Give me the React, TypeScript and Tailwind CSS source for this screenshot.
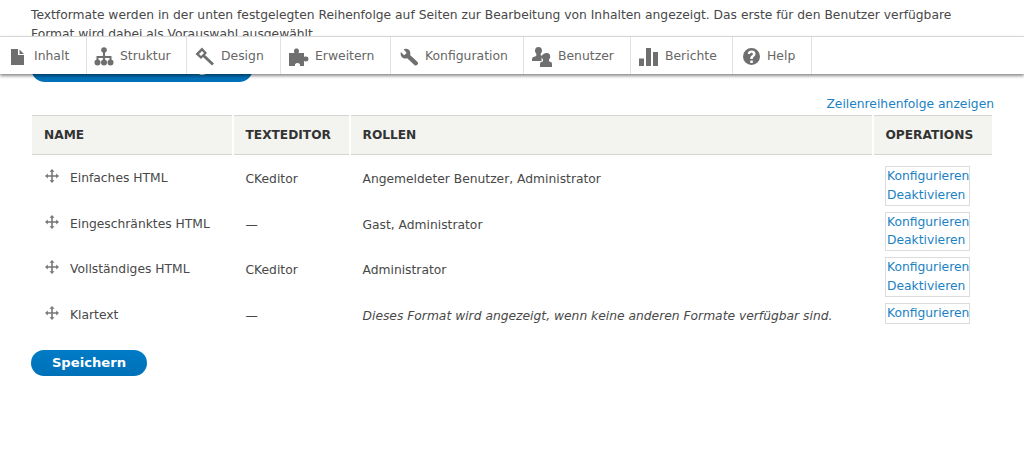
const rows = [
    { name: "Einfaches HTML", editor: "CKeditor", roles: "Angemeldeter Benutzer, Administrator", disable: true },
    { name: "Eingeschränktes HTML", editor: "—", roles: "Gast, Administrator", disable: true },
    { name: "Vollständiges HTML", editor: "CKeditor", roles: "Administrator", disable: true },
    { name: "Klartext", editor: "—", roles: "Dieses Format wird angezeigt, wenn keine anderen Formate verfügbar sind.", disable: false },
];

const icons: Record<string, React.ReactNode> = {
    Inhalt: <path d="M0 0h7v6h6v10H0zM8.500 0.500L13 5H8.500z" />,
    Struktur: (
        <>
            <circle cx="10" cy="3" r="2.800" />
            <path d="M9 5h2v4h6.500v4h-2v-2H11v2H9v-2H4.500v2h-2V9H9z" />
            <circle cx="3.500" cy="15.500" r="3" />
            <circle cx="10" cy="15.500" r="3" />
            <circle cx="16.500" cy="15.500" r="3" />
        </>
    ),
    Design: <path fillRule="evenodd" d="M7 0.500L0.500 7 6 12l2-2 9 8.500 2-2-9-8.500 2-2zM7 4L4 7l2 2 3-3z" />,
    Erweitern: <path d="M0 5h5.500C4.500 3 5 0.500 7.500 0.500S10.500 3 9.500 5H15v4c2-1 4.500-.5 4.500 2s-2.500 3-4.500 2v5h-4c.5-1.500-.5-3-2.500-3S5.500 16.500 6 18H0z" />,
    Konfiguration: <path d="M1 4l3.500 3.500L7.500 5 4 1c3-1.500 7-.5 7.500 4 0 .8 0 1.500-.3 2.200L19.500 15c.8 1 .7 2.300-.3 3.200-1 1-2.200 1-3.200.1L8 10.800C4 12.500-.5 9 1 4z" />,
    Benutzer: (
        <>
            <path d="M6.500 0C8.800 0 10 1.600 10 3.600c0 1.300-.5 2.500-1.300 3.200v1.500c.8.300 1.500.5 2.100.8-.8.800-1.300 2-1.300 3.400 0 .5.100 1 .2 1.500H0v-2c0-1.800 2.500-2.300 4.300-3V6.800C3.500 6.100 3 4.900 3 3.600 3 1.600 4.200 0 6.500 0z" />
            <path d="M15 6c2 0 3.200 1.500 3.200 3.500 0 1.300-.5 2.400-1.200 3v1.700c1.300.5 3 .9 3 2.600V20H8v-3.200c0-1.700 1.700-2.100 3-2.600v-1.700c-.7-.6-1.200-1.700-1.200-3C9.800 7.500 13 6 15 6z" />
        </>
    ),
    Berichte: <path d="M0 10.500h5V18H0zM7 0h5v18H7zM14 4h5v14h-5z" />,
    Help: <path fillRule="evenodd" d="M8.500 0a8.500 8.500 0 1 1 0 17A8.500 8.500 0 0 1 8.500 0zM7.300 12.500V15h2.500v-2.500zM8.700 2.500C6.600 2.500 5 3.500 4.600 5.600l2.200.6c.3-1 .9-1.500 1.700-1.500s1.400.5 1.400 1.200c0 1.400-2.600 1.600-2.600 4.200v1h2.500v-.6c0-1.600 2.700-1.900 2.700-4.700 0-2.100-1.700-3.300-3.800-3.300z" />,
};

const menu = [
    { label: "Inhalt", w: "w-[87px]", box: "0 0 13 16", size: "w-[13px] h-[16px]", gap: "gap-[10px] pl-[11px]" },
    { label: "Struktur", w: "w-[100px]", box: "0 0 20 19", size: "w-[20px] h-[19px]", gap: "gap-[6px] pl-[7px]" },
    { label: "Design", w: "w-[94px]", box: "0 0 20 19", size: "w-[20px] h-[19px]", gap: "gap-[6px] pl-[8px]" },
    { label: "Erweitern", w: "w-[110px]", box: "0 0 20 18", size: "w-[20px] h-[18px]", gap: "gap-[6px] pl-[8px]" },
    { label: "Konfiguration", w: "w-[133px]", box: "0 0 20 19", size: "w-[18px] h-[18px]", gap: "gap-[7px] pl-[9px]" },
    { label: "Benutzer", w: "w-[107px]", box: "0 0 20 20", size: "w-[20px] h-[20px]", gap: "gap-[6px] pl-[8px]" },
    { label: "Berichte", w: "w-[102px]", box: "0 0 20 18", size: "w-[20px] h-[18px]", gap: "gap-[6px] pl-[8px]" },
    { label: "Help", w: "w-[79px]", box: "0 0 17 17", size: "w-[17px] h-[17px]", gap: "gap-[7px] pl-[10px]" },
];

function DragHandle() {
    return (
        <svg viewBox="0 0 14 14" className="w-[14px] h-[14px] fill-[#777777] shrink-0">
            <path d="M7 0l2.500 2.800H7.800v3.400h3.400V4.500L14 7l-2.800 2.500V7.800H7.800v3.400h1.700L7 14l-2.500-2.800h1.700V7.800H2.800v1.700L0 7l2.800-2.500v1.700h3.400V2.800H4.500z" />
        </svg>
    );
}

export default function App() {
    return (
        <div className="relative h-[464px] w-[1024px] overflow-hidden bg-white text-[12.3px] text-[#484848] font-['DejaVu_Sans',sans-serif]">
            {/* toolbar sits over the scrolled page */}
            <div className="absolute left-0 right-0 top-[36px] z-10 flex h-[38px] border-t border-[#d6d6d6] bg-white shadow-[0_2px_3px_rgba(0,0,0,0.45)]">
                {menu.map(m => (
                    <div key={m.label} className={`flex h-full items-center border-r border-[#e2e2e2] pt-[2px] text-[12.4px] text-[#666666] ${m.w} ${m.gap}`}>
                        <svg viewBox={m.box} className={`shrink-0 fill-[#6f6f6f] ${m.size}`}>
                            {icons[m.label]}
                        </svg>
                        <span>{m.label}</span>
                    </div>
                ))}
            </div>

            <div className="px-[31px] pt-[6px]">
                <p className="h-[48px] w-[962px] leading-[19px]">
                    Textformate werden in der unten festgelegten Reihenfolge auf Seiten zur Bearbeitung von Inhalten angezeigt. Das erste für den Benutzer verfügbare Format wird dabei als Vorauswahl ausgewählt.
                </p>

                {/* button mostly hidden under the toolbar */}
                <div className="flex h-[28px] w-[222px] items-center justify-center rounded-[14px] bg-[#0071b8] text-[13px] font-bold text-white">
                    Textformat hinzufügen
                </div>

                <div className="mt-[13px] flex h-[19px] items-center justify-end text-[#1a82c4]">
                    <span className="mr-[-1px]">Zeilenreihenfolge anzeigen</span>
                </div>

                <div className="ml-[1px] mt-[1px] w-[960px]">
                    <div className="grid h-[40px] grid-cols-[200px_115.5px_521.5px_118.5px] gap-x-[1.5px] text-[12.2px] font-bold text-[#333333]">
                        {["NAME", "TEXTEDITOR", "ROLLEN", "OPERATIONS"].map(h => (
                            <div key={h} className="flex items-center border-y border-[#d5d5d0] bg-[#f3f3ef] pl-[12px]">
                                {h}
                            </div>
                        ))}
                    </div>

                    <div className="pt-[11px]">
                        {rows.map(r => (
                            <div key={r.name} className="mb-[6px] grid grid-cols-[200px_115.5px_521.5px_118.5px] gap-x-[1.5px]">
                                <div className="flex items-start gap-[11px] pl-[13px] pt-[3px]">
                                    <DragHandle />
                                    <span className="mt-[1px] leading-[16px]">{r.name}</span>
                                </div>
                                <div className="pl-[12px] pt-[5px] leading-[16px]">{r.editor}</div>
                                <div className={`pl-[12px] pt-[5px] leading-[16px] ${r.disable ? "" : "italic"}`}>{r.roles}</div>
                                <div className="pl-[11.5px]">
                                    <div className="w-[85px] border border-[#dcdcdc] pl-[1px] leading-[18.83px] text-[#1a82c4]">
                                        <div>Konfigurieren</div>
                                        {r.disable && <div>Deaktivieren</div>}
                                    </div>
                                </div>
                            </div>
                        ))}
                    </div>
                </div>

                <button
                    type="button"
                    className="mt-[26px] flex h-[26px] w-[116px] items-center justify-center rounded-[13px] bg-gradient-to-b from-[#007bc6] to-[#0071b8] text-[13.15px] font-bold text-white"
                >
                    Speichern
                </button>
            </div>
        </div>
    );
}
